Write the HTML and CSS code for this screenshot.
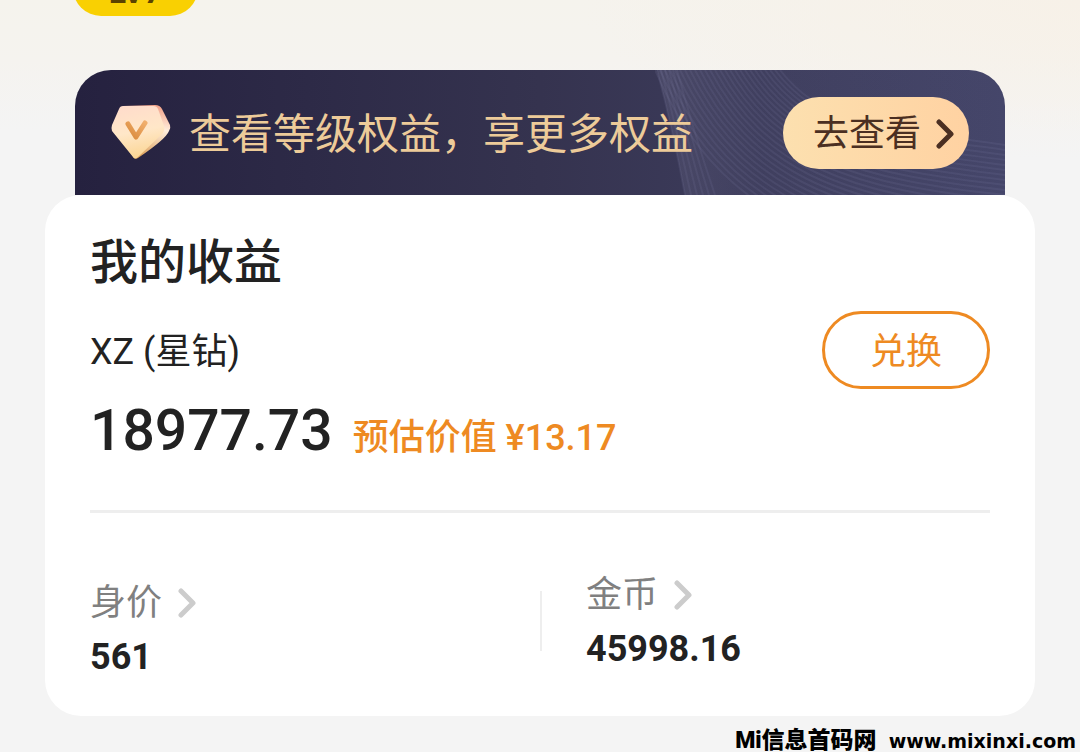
FILE: index.html
```html
<!DOCTYPE html>
<html lang="zh-CN">
<head>
  <meta charset="UTF-8">
  <meta name="viewport" content="width=device-width, initial-scale=1.0">
  <title>我的收益</title>
  <link rel="stylesheet" href="styles.css">
</head>
<body>
  <header class="top">
    <span class="level">LV7</span>
  </header>

  <main class="content">
    <section class="banner">
      <svg class="waves" id="waves" viewBox="0 0 350 125" aria-hidden="true">
        <defs>
          <linearGradient id="fold" x1="0" x2="1" y1="0" y2="0">
            <stop offset="0" stop-color="#7d7c9c" stop-opacity="0.25"/>
            <stop offset="0.3" stop-color="#7d7c9c" stop-opacity="0.05"/>
            <stop offset="1" stop-color="#7d7c9c" stop-opacity="0"/>
          </linearGradient>
        </defs>
        <path d="M2 0Q18 60 30 125H350V0Z" fill="url(#fold)"/>
      </svg>

      <svg class="gem" viewBox="0 0 60 56" aria-hidden="true">
        <defs>
          <linearGradient id="gemFront" x1="0.3" x2="0.5" y1="0" y2="1">
            <stop offset="0" stop-color="#ffdccb"/>
            <stop offset="0.5" stop-color="#ffe7c8"/>
            <stop offset="1" stop-color="#fbd592"/>
          </linearGradient>
          <linearGradient id="gemSide" x1="0.6" x2="0.4" y1="0" y2="1">
            <stop offset="0" stop-color="#f2a58c"/>
            <stop offset="0.4" stop-color="#ffeedd"/>
            <stop offset="1" stop-color="#d99a50"/>
          </linearGradient>
          <linearGradient id="gemTick" x1="0" x2="1" y1="1" y2="0">
            <stop offset="0" stop-color="#d98a3c"/>
            <stop offset="1" stop-color="#f0ae6c"/>
          </linearGradient>
        </defs>
        <path d="M12 1L44 0Q49 0 51 4L59 20Q60 23 58 26Q55 34 27 53Q24 55 22 52Z" fill="url(#gemSide)"/>
        <path d="M12 1L42 1Q46 1 47 4L53 21Q54 25 52 28L27 52Q24 55 22 52L1 26Q0 23 1 20L8 4Q9 1 12 1Z" fill="url(#gemFront)"/>
        <path d="M17 19L25 32L34 18" fill="none" stroke="url(#gemTick)" stroke-width="5" stroke-linecap="round" stroke-linejoin="round"/>
      </svg>

      <p class="banner-text">查看等级权益，享更多权益</p>
      <button class="banner-btn" type="button">
        去查看
        <svg class="arrow" viewBox="0 0 18 30" aria-hidden="true"><path d="M3 3L15 15L3 27"/></svg>
      </button>
    </section>

    <section class="card">
      <h1>我的收益</h1>

      <div class="asset">
        <span class="asset-name">XZ (星钻)</span>
        <button class="exchange" type="button">兑换</button>
      </div>

      <div class="amount">
        <strong>18977.73</strong>
        <span>预估价值 ¥13.17</span>
      </div>

      <div class="stats">
        <div class="stat stat-worth">
          <a href="#worth">身价
            <svg class="arrow" viewBox="0 0 18 30" aria-hidden="true"><path d="M3 3L15 15L3 27"/></svg>
          </a>
          <b>561</b>
        </div>
        <div class="stat stat-coins">
          <a href="#coins">金币
            <svg class="arrow" viewBox="0 0 18 30" aria-hidden="true"><path d="M3 3L15 15L3 27"/></svg>
          </a>
          <b>45998.16</b>
        </div>
      </div>
    </section>
  </main>

  <footer class="site">
    <span>Mi信息首码网</span>
    <span class="site-url">www.mixinxi.com</span>
  </footer>

  <script src="waves.js"></script>
</body>
</html>
```
FILE: styles.css
```css
:root {
  --bg: #f4f4f4;
  --text: #222222;
  --muted: #808080;
  --orange: #ee8a22;
  --gold: #edcb99;
  --brown: #4b2f22;
}

* {
  margin: 0;
  padding: 0;
  box-sizing: border-box;
}

body {
  min-height: 100vh;
  color: var(--text);
  font-family: Roboto, "Noto Sans CJK SC", sans-serif;
  background: radial-gradient(ellipse 500px 160px at 100% 0, #f7f1e8, rgba(247, 241, 232, 0)),
    linear-gradient(#f5f3ed, #f5f3ef 60px, var(--bg) 130px);
}

button {
  border: none;
  font-family: inherit;
  cursor: pointer;
}

.top {
  height: 70px;
  padding: 0 73px;
  overflow: hidden;
}

.level {
  display: block;
  width: 125px;
  height: 56px;
  margin-top: -40px;
  border-radius: 28px;
  background: #f9d002;
  color: #5b4200;
  font-size: 32px;
  font-weight: bold;
  line-height: 64px;
  text-align: center;
}

.content {
  padding: 0 45px;
}

/* banner */
.banner {
  position: relative;
  display: flex;
  align-items: center;
  height: 125px;
  margin: 0 30px;
  padding: 0 36px;
  border-radius: 36px 36px 0 0;
  overflow: hidden;
  background: linear-gradient(90deg, #25213f, #35334f 50%, #45466a);
}

.waves {
  position: absolute;
  top: 0;
  right: 0;
  width: 350px;
  height: 125px;
}

.waves .line {
  fill: none;
  stroke: #8f8fb5;
  stroke-width: 2;
  stroke-opacity: 0.12;
}

.gem {
  flex: none;
  width: 60px;
  height: 56px;
}

.banner-text {
  position: relative;
  margin-left: 18px;
  padding-top: 4px;
  color: var(--gold);
  font-size: 42px;
  line-height: 60px;
  white-space: nowrap;
}

.banner-btn {
  position: relative;
  display: flex;
  align-items: center;
  gap: 15px;
  height: 72px;
  margin-left: auto;
  padding: 2px 15px 0 30px;
  border-radius: 36px;
  background: linear-gradient(90deg, #fce0af, #ffd2a2);
  color: var(--brown);
  font-size: 36px;
  line-height: 48px;
  white-space: nowrap;
}

.arrow {
  width: 18px;
  height: 30px;
  fill: none;
  stroke: #cccccc;
  stroke-width: 5;
  stroke-linecap: round;
  stroke-linejoin: round;
}

.banner-btn .arrow {
  stroke: var(--brown);
}

/* earnings card */
.card {
  padding: 36px 45px 27px;
  border-radius: 36px;
  background: #ffffff;
}

h1 {
  font-size: 48px;
  font-weight: 500;
  line-height: 64px;
}

.asset {
  display: flex;
  align-items: center;
  justify-content: space-between;
  margin-top: 16px;
}

.asset-name {
  padding-top: 4px;
  font-size: 36px;
  line-height: 48px;
}

.exchange {
  width: 168px;
  height: 78px;
  padding-top: 4px;
  border: 3px solid var(--orange);
  border-radius: 39px;
  background: none;
  color: var(--orange);
  font-size: 36px;
  line-height: 48px;
}

.amount {
  display: flex;
  align-items: baseline;
  gap: 20px;
  height: 124px;
  border-bottom: 3px solid #eeeeee;
  line-height: 84px;
}

.amount strong {
  font-size: 57px;
  font-weight: 500;
}

.amount span {
  color: var(--orange);
  font-size: 36px;
  font-weight: 500;
}

.stats {
  display: grid;
  grid-template-columns: 1fr 1fr;
  padding-top: 60px;
}

.stat a {
  display: flex;
  align-items: center;
  gap: 16px;
  color: var(--muted);
  font-size: 36px;
  line-height: 44px;
  text-decoration: none;
}

.stat b {
  display: block;
  font-size: 36px;
  line-height: 64px;
}

.stat-worth {
  padding-top: 8px;
}

.stat-coins {
  position: relative;
  padding-left: 46px;
}

.stat-coins::before {
  content: "";
  position: absolute;
  top: 18px;
  left: 0;
  width: 2px;
  height: 60px;
  background: #eeeeee;
}

.site {
  display: flex;
  justify-content: flex-end;
  align-items: center;
  gap: 12px;
  padding: 14px 4px 0;
  color: #000000;
  font-size: 23px;
  font-weight: 900;
  line-height: 22px;
}

.site-url {
  font-family: "DejaVu Sans", sans-serif;
  font-size: 19px;
}
```
FILE: waves.js
```js
const waves = document.getElementById('waves');

function addLine(d) {
  const path = document.createElementNS('http://www.w3.org/2000/svg', 'path');
  path.setAttribute('class', 'line');
  path.setAttribute('d', d);
  waves.appendChild(path);
}

// long curves sweeping to the right edge
for (let i = 0; i < 26; i++) {
  const x = i * 5;
  addLine(`M${x} 0C${x + 50} ${115 - i * 2} ${x + 130} ${185 - i * 5} 350 ${200 - i * 5}`);
}

// short dense lines beside the fold
for (let i = 0; i < 6; i++) {
  addLine(`M${2 + i * 4} 0Q${18 + i * 4} 60 ${30 + i * 6} 125`);
}
```
